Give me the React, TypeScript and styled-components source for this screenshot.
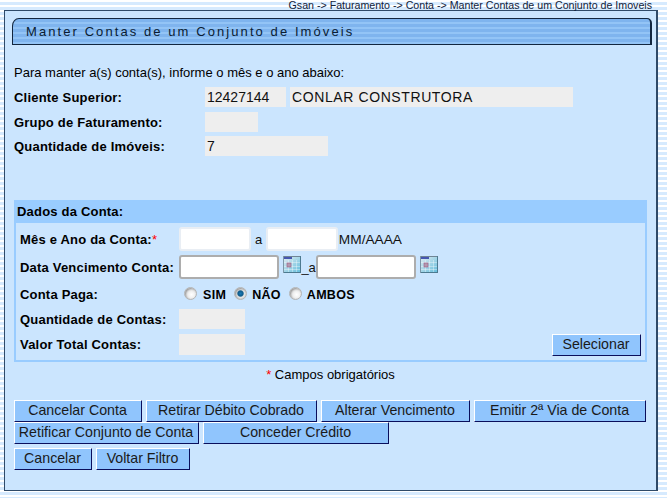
import styled, { createGlobalStyle } from "styled-components";

const GlobalStyle = createGlobalStyle`
  html, body {
    margin: 0;
    padding: 0;
    height: 498px;
    overflow: hidden;
  }
  body {
    font-family: "Liberation Sans", Arial, sans-serif;
    color: #000;
    background: repeating-linear-gradient(
      to bottom,
      #ffffff 0px,
      #ffffff 2px,
      #d6eafe 2px,
      #d6eafe 5px
    );
  }
`;

const Breadcrumb = styled.div`
  height: 10px;
  width: 652px;
  text-align: right;
  font-size: 10.65px;
  line-height: 10px;
  color: #11223a;
  white-space: nowrap;
`;

const Panel = styled.main`
  box-sizing: border-box;
  width: 654px;
  height: 481px;
  margin-left: 4px;
  padding: 7px 5px 0 9px;
  background: #cbe5fe;
  border: 1px solid #2f4a68;
  border-right-width: 2px;
`;

const TitleBar = styled.h1`
  box-sizing: border-box;
  width: 640px;
  height: 27px;
  margin: 0 0 0 -2px;
  padding: 0 0 0 13px;
  font-size: 13px;
  font-weight: 400;
  line-height: 25px;
  letter-spacing: 2.08px;
  color: #0a1c33;
  border: 1px solid #12263f;
  border-right-width: 2px;
  border-top-left-radius: 7px 8px;
  border-top-right-radius: 5px;
  background: repeating-linear-gradient(
    to bottom,
    #7fb4ee 0px,
    #7fb4ee 3px,
    #93c4f6 3px,
    #93c4f6 5px
  );
`;

const Intro = styled.p`
  margin: 21px 0 7px;
  height: 14px;
  font-size: 13px;
  line-height: 14px;
`;

const InfoRow = styled.div<{ $mb: number }>`
  display: flex;
  align-items: center;
  height: 20px;
  margin-bottom: ${(p) => p.$mb}px;
`;

const InfoLabel = styled.span`
  width: 191px;
  font-size: 13px;
  font-weight: 700;
  letter-spacing: 0.2px;
`;

const ReadOnly = styled.div<{ $w: number; $h?: number; $track?: number }>`
  box-sizing: border-box;
  width: ${(p) => p.$w}px;
  height: ${(p) => p.$h ?? 20}px;
  margin-right: 4px;
  padding-left: 2px;
  background: #eeeeee;
  font-size: 14px;
  line-height: 21px;
  letter-spacing: ${(p) => p.$track ?? 0}px;
  color: #111;
`;

const DataBox = styled.section`
  box-sizing: border-box;
  width: 633px;
  height: 162px;
  margin-top: 44px;
  border: 2px solid #99ccff;
  border-top: 0;
`;

const DataHeader = styled.h2`
  height: 23px;
  margin: 0 -2px;
  padding-left: 3px;
  background: #99ccff;
  font-size: 13px;
  font-weight: 700;
  line-height: 23px;
  letter-spacing: 0.2px;
`;

const DataBody = styled.div`
  padding: 2px 4px 0;
`;

const DataRow = styled.div<{ $h: number }>`
  display: flex;
  align-items: center;
  height: ${(p) => p.$h}px;
`;

const DataLabel = styled.span`
  width: 159px;
  flex: none;
  font-size: 13px;
  font-weight: 700;
  letter-spacing: 0.2px;
  white-space: nowrap;
`;

const Required = styled.span`
  color: #ff0000;
  font-weight: 400;
`;

const TextInput = styled.input<{ $w: number; $plain?: boolean }>`
  box-sizing: border-box;
  flex: none;
  width: ${(p) => p.$w}px;
  height: 24px;
  padding: 0;
  background: #fff;
  border: 2px solid ${(p) => (p.$plain ? "#e9eef4" : "#adadad")};
  border-radius: 3px;
  outline: none;
`;

const Plain = styled.span<{ $gap?: number; $size?: number }>`
  flex: none;
  margin: 0 ${(p) => p.$gap ?? 0}px;
  font-size: ${(p) => p.$size ?? 13}px;
  color: #111;
`;

const CalendarWrap = styled.svg`
  flex: none;
  margin: -5px 0 0 4px;
`;

const RadioGroup = styled.div`
  display: flex;
  align-items: center;
  padding-left: 5px;
`;

const Radio = styled.input`
  appearance: none;
  box-sizing: border-box;
  width: 13px;
  height: 13px;
  margin: -2px 0 0 0;
  border: 1px solid #b4b4b4;
  border-radius: 50%;
  background: radial-gradient(circle at 60% 60%, #ffffff 0%, #ececec 45%, #c4c4c4 100%);
  box-shadow: inset 1px 1px 2px rgba(0, 0, 0, 0.3);

  &:checked {
    background: radial-gradient(circle, #1b79b4 0%, #0f5a8a 34%, #e8e8e8 48%, #bcbcbc 100%);
  }
`;

const RadioText = styled.label<{ $ml: number; $mr: number }>`
  margin: 2px ${(p) => p.$mr}px 0 ${(p) => p.$ml}px;
  font-size: 12.5px;
  font-weight: 700;
  letter-spacing: 0.3px;
`;

const Button = styled.button<{ $w: number }>`
  box-sizing: border-box;
  width: ${(p) => p.$w}px;
  height: 22px;
  padding: 0 1px 2px 0;
  background: #90c5fd;
  border: 1px solid;
  border-color: #ffffff #0a0f5c #0a0f5c #ffffff;
  font-family: "Liberation Sans", Arial, sans-serif;
  font-size: 14.2px;
  color: #1a1a1a;
  white-space: nowrap;
  cursor: pointer;
`;

const SelectWrap = styled.div`
  margin-left: auto;
`;

const Note = styled.p`
  width: 633px;
  height: 14px;
  margin: 6px 0 18px;
  text-align: center;
  font-size: 13px;
  line-height: 14px;
`;

const ButtonRow = styled.div<{ $mb?: number }>`
  display: flex;
  gap: 4px;
  margin-bottom: ${(p) => p.$mb ?? 0}px;
`;

function CalendarIcon() {
  return (
    <CalendarWrap width="18" height="17" viewBox="0 0 18 17">
      <defs>
        <linearGradient id="cal" x1="0" y1="0" x2="1" y2="1">
          <stop offset="0" stopColor="#e8eef2" />
          <stop offset="1" stopColor="#5fbcdc" />
        </linearGradient>
      </defs>
      <rect width="18" height="17" fill="url(#cal)" />
      <rect width="18" height="1" fill="#6f8494" />
      <rect x="17" width="1" height="17" fill="#4d7a90" />
      <rect y="16" width="18" height="1" fill="#4d7a90" />
      <rect width="1" height="17" fill="#7d97a8" />
      <rect x="1" y="1" width="8" height="2" fill="#4656b0" />
      <path d="M1 6.5h16M1 10.5h16M1 13.5h16M5.5 4v12M9.5 4v12M13.5 4v12" stroke="#fff" strokeOpacity=".35" />
      <rect x="4" y="7" width="4" height="4" fill="#b39ab0" stroke="#a05a80" strokeWidth=".6" />
    </CalendarWrap>
  );
}

export default function App() {
  return (
    <>
      <GlobalStyle />
      <Breadcrumb>Gsan -&gt; Faturamento -&gt; Conta -&gt; Manter Contas de um Conjunto de Imoveis</Breadcrumb>
      <Panel>
        <TitleBar>Manter Contas de um Conjunto de Imóveis</TitleBar>
        <Intro>Para manter a(s) conta(s), informe o mês e o ano abaixo:</Intro>
        <InfoRow $mb={5}>
          <InfoLabel>Cliente Superior:</InfoLabel>
          <ReadOnly $w={81}>12427144</ReadOnly>
          <ReadOnly $w={283} $track={0.6}>CONLAR CONSTRUTORA</ReadOnly>
        </InfoRow>
        <InfoRow $mb={4}>
          <InfoLabel>Grupo de Faturamento:</InfoLabel>
          <ReadOnly $w={53} />
        </InfoRow>
        <InfoRow $mb={4}>
          <InfoLabel>Quantidade de Imóveis:</InfoLabel>
          <ReadOnly $w={123}>7</ReadOnly>
        </InfoRow>
        <DataBox>
          <DataHeader>Dados da Conta:</DataHeader>
          <DataBody>
            <DataRow $h={28}>
              <DataLabel>
                Mês e Ano da Conta:<Required>*</Required>
              </DataLabel>
              <TextInput $w={72} $plain />
              <Plain $gap={4}>a</Plain>
              <TextInput $w={72} $plain />
              <Plain $gap={0.6} $size={13.7}>MM/AAAA</Plain>
            </DataRow>
            <DataRow $h={28}>
              <DataLabel>Data Vencimento Conta:</DataLabel>
              <TextInput $w={100} />
              <CalendarIcon />
              <Plain $gap={0.4}>_a</Plain>
              <TextInput $w={100} />
              <CalendarIcon />
            </DataRow>
            <DataRow $h={26}>
              <DataLabel>Conta Paga:</DataLabel>
              <RadioGroup>
                <Radio type="radio" name="paga" />
                <RadioText $ml={6} $mr={8}>SIM</RadioText>
                <Radio type="radio" name="paga" defaultChecked />
                <RadioText $ml={5} $mr={8}>NÃO</RadioText>
                <Radio type="radio" name="paga" />
                <RadioText $ml={5} $mr={0}>AMBOS</RadioText>
              </RadioGroup>
            </DataRow>
            <DataRow $h={24}>
              <DataLabel>Quantidade de Contas:</DataLabel>
              <ReadOnly $w={66} />
            </DataRow>
            <DataRow $h={27}>
              <DataLabel>Valor Total Contas:</DataLabel>
              <ReadOnly $w={66} $h={21} />
              <SelectWrap>
                <Button $w={89}>Selecionar</Button>
              </SelectWrap>
            </DataRow>
          </DataBody>
        </DataBox>
        <Note>
          <Required>*</Required> Campos obrigatórios
        </Note>
        <ButtonRow>
          <Button $w={128}>Cancelar Conta</Button>
          <Button $w={171}>Retirar Débito Cobrado</Button>
          <Button $w={149}>Alterar Vencimento</Button>
          <Button $w={172}>Emitir 2ª Via de Conta</Button>
        </ButtonRow>
        <ButtonRow $mb={4}>
          <Button $w={185}>Retificar Conjunto de Conta</Button>
          <Button $w={186}>Conceder Crédito</Button>
        </ButtonRow>
        <ButtonRow>
          <Button $w={78}>Cancelar</Button>
          <Button $w={94}>Voltar Filtro</Button>
        </ButtonRow>
      </Panel>
    </>
  );
}
